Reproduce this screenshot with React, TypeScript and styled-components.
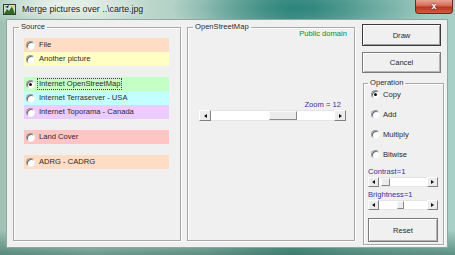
import React from "react";
import styled, { createGlobalStyle } from "styled-components";

const GlobalStyle = createGlobalStyle`
  html, body { margin: 0; padding: 0; overflow: hidden; background: #6f9c90; }
  * { box-sizing: border-box; }
`;

const UI_FONT = `"Liberation Sans", Arial, sans-serif`;

const Window = styled.div`
  width: 455px;
  height: 255px;
  display: flex;
  flex-direction: column;
  font-family: ${UI_FONT};
  font-size: 7.6px;
  color: #2a2a2a;
  background:
    radial-gradient(ellipse 130px 30px at 300px 8px, rgba(30, 125, 115, 0.8), rgba(30, 125, 115, 0) 100%),
    radial-gradient(ellipse 90px 25px at 60px 4px, rgba(235, 245, 238, 0.9), rgba(235, 245, 238, 0) 100%),
    linear-gradient(180deg, rgba(0, 0, 0, 0) 90%, rgba(40, 100, 85, 0.6) 100%),
    linear-gradient(90deg, #9fc2b4 0%, #cfe2d8 20%, #a9cbc0 45%, #5f9f95 64%, #8fc0b6 80%, #a9d0c6 100%);
`;

const TitleBar = styled.div`
  height: 19px;
  display: flex;
  align-items: flex-start;
  padding-left: 3px;
`;

const AppIcon = styled.svg`
  width: 14px;
  height: 13px;
  margin-top: 3px;
  flex: none;
`;

const Title = styled.div`
  margin-left: 5px;
  margin-top: 4px;
  font-family: ${UI_FONT};
  font-size: 8.8px;
  line-height: 10px;
  color: #1a1a1a;
  white-space: nowrap;
  text-shadow: 0 0 4px rgba(255, 255, 255, 0.8);
`;

const Spacer = styled.div`
  flex: 1;
`;

const CloseButton = styled.div`
  width: 38px;
  height: 14px;
  margin-right: 2px;
  border: 1px solid #6b2a22;
  border-top: none;
  border-radius: 0 0 4px 4px;
  background: linear-gradient(180deg, #e9a493 0%, #d26a55 45%, #b8371f 55%, #cf5e3f 100%);
  display: flex;
  align-items: center;
  justify-content: center;
  color: #fff;
  font-family: ${UI_FONT};
  font-weight: bold;
  font-size: 9px;
  line-height: 1;
  text-shadow: 0 0 2px #5a1a10;
`;

const Client = styled.div`
  flex: 1;
  margin: 0 7px 7px 6px;
  background: #f0f0f0;
  display: flex;
  align-items: stretch;
  padding: 2px 0 6px 6px;
  gap: 6px;
  border: 1px solid #8fa8a0;
`;

const Group = styled.fieldset<{ $width: number }>`
  margin: 0;
  width: ${(p) => p.$width}px;
  min-width: 0;
  border: 1px solid #a8a8a8;
  box-shadow: inset 1px 1px 0 #fff, 1px 1px 0 #fff;
  padding: 0;
  display: flex;
  flex-direction: column;
`;

const Legend = styled.legend<{ $indent: number }>`
  margin-left: ${(p) => p.$indent}px;
  padding: 0 2px;
  font-size: 7.6px;
  line-height: 10px;
  color: #2a2a2a;
`;

const RadioList = styled.div`
  display: flex;
  flex-direction: column;
  padding: 6px 0 0 10px;
`;

const RadioRow = styled.div<{ $bg: string; $gap: number }>`
  width: 145px;
  height: 14px;
  margin-top: ${(p) => p.$gap}px;
  background: ${(p) => p.$bg};
  display: flex;
  align-items: center;
  padding-left: 2px;
  gap: 3px;
  white-space: nowrap;
`;

const Radio = styled.span<{ $checked?: boolean }>`
  width: 9px;
  height: 9px;
  flex: none;
  border-radius: 50%;
  background: #fff;
  border: 1px solid;
  border-color: #9a9a9a #f4f4f4 #f4f4f4 #9a9a9a;
  box-shadow: inset 1px 1px 0 #6a6a6a;
  display: flex;
  align-items: center;
  justify-content: center;
  &::after {
    content: "";
    width: 3px;
    height: 3px;
    border-radius: 50%;
    background: ${(p) => (p.$checked ? "#111" : "transparent")};
  }
`;

const RadioLabel = styled.span<{ $focused?: boolean }>`
  line-height: 10px;
  padding: 0 1px;
  outline: ${(p) => (p.$focused ? "1px dotted #444" : "none")};
  outline-offset: 0;
`;

const MapBody = styled.div`
  flex: 1;
  display: flex;
  flex-direction: column;
  padding: 0 8px 0 11px;
`;

const PublicDomain = styled.div`
  align-self: flex-end;
  margin-top: -3px;
  margin-right: -1px;
  color: #138a13;
  line-height: 10px;
`;

const ZoomLabel = styled.div`
  align-self: flex-end;
  margin-top: 61px;
  margin-right: 5px;
  color: #34349a;
  line-height: 10px;
`;

const ScrollBar = styled.div<{ $height: number }>`
  height: ${(p) => p.$height}px;
  display: flex;
  align-items: stretch;
  background: #fff;
`;

const ArrowButton = styled.div<{ $w: number }>`
  width: ${(p) => p.$w}px;
  flex: none;
  background: #ececec;
  border: 1px solid;
  border-color: #fff #808080 #808080 #fff;
  display: flex;
  align-items: center;
  justify-content: center;
`;

const Arrow = styled.span<{ $dir: "left" | "right" }>`
  width: 0;
  height: 0;
  border-top: 2.5px solid transparent;
  border-bottom: 2.5px solid transparent;
  ${(p) =>
    p.$dir === "left"
      ? "border-right: 3px solid #111;"
      : "border-left: 3px solid #111;"}
`;

const Track = styled.div`
  flex: 1;
  display: flex;
  align-items: stretch;
  background: #fff;
  border-top: 1px solid #e4e4e4;
  border-bottom: 1px solid #e4e4e4;
`;

const TrackPart = styled.div`
  flex: none;
`;

const Thumb = styled.div<{ $w: number }>`
  width: ${(p) => p.$w}px;
  flex: none;
  background: #ececec;
  border: 1px solid;
  border-color: #fafafa #8a8a8a #8a8a8a #fafafa;
`;

const RightColumn = styled.div`
  width: 82px;
  display: flex;
  flex-direction: column;
  padding-top: 2px;
  margin-left: 1px;
`;

const PushButton = styled.div<{ $default?: boolean; $w: number; $h: number }>`
  width: ${(p) => p.$w}px;
  height: ${(p) => p.$h}px;
  background: #f0f0f0;
  border: 1px solid ${(p) => (p.$default ? "#3a3a3a" : "#7a7a7a")};
  box-shadow: ${(p) =>
    p.$default
      ? "inset 1px 1px 0 #fff, inset -1px -1px 0 #a0a0a0"
      : "inset 1px 1px 0 #fff, inset -1px -1px 0 #b4b4b4"};
  display: flex;
  align-items: center;
  justify-content: center;
  color: #2a2a2a;
  font-size: 7.6px;
`;

const OpGroup = styled(Group)`
  margin-top: 5px;
  margin-left: 1px;
  flex: 1;
  margin-bottom: -4px;
`;

const OpBody = styled.div`
  display: flex;
  flex-direction: column;
  padding: 1px 0 0 4px;
`;

const OpRadio = styled.div`
  height: 10px;
  margin-top: 10px;
  margin-left: 3px;
  display: flex;
  align-items: center;
  gap: 3px;
  &:first-child {
    margin-top: 0;
  }
`;

const SliderLabel = styled.div<{ $top: number }>`
  margin-top: ${(p) => p.$top}px;
  color: #34349a;
  line-height: 10px;
`;

const SliderBox = styled.div`
  width: 70px;
`;

const ResetWrap = styled.div`
  margin-top: 8px;
`;

const ButtonGap = styled.div`
  height: 6px;
`;

type SBProps = { height: number; arrow: number; before: number; thumb: number };

const Scroll: React.FC<SBProps> = ({ height, arrow, before, thumb }) => (
  <ScrollBar $height={height}>
    <ArrowButton $w={arrow}>
      <Arrow $dir="left" />
    </ArrowButton>
    <Track>
      <TrackPart style={{ width: before }} />
      <Thumb $w={thumb} />
    </Track>
    <ArrowButton $w={arrow}>
      <Arrow $dir="right" />
    </ArrowButton>
  </ScrollBar>
);

const sources = [
  { label: "File", bg: "#ffdcc4", gap: 0 },
  { label: "Another picture", bg: "#ffffc4", gap: 0 },
  { label: "Internet OpenStreetMap", bg: "#c4ffc4", gap: 11, checked: true },
  { label: "Internet Terraserver - USA", bg: "#c4ffff", gap: 0 },
  { label: "Internet Toporama - Canada", bg: "#eccbff", gap: 0 },
  { label: "Land Cover", bg: "#ffc4c4", gap: 11 },
  { label: "ADRG - CADRG", bg: "#ffdcc4", gap: 11 },
];

const operations = ["Copy", "Add", "Multiply", "Bitwise"];

export default function App() {
  return (
    <>
      <GlobalStyle />
      <Window>
        <TitleBar>
          <AppIcon viewBox="0 0 14 13">
            <rect x="0.5" y="1.5" width="12" height="10" fill="#cfe0c8" stroke="#2e4226" />
            <path d="M1 11 L4 6 L6 8 L9 3 L12 11 Z" fill="#2f6a2a" />
            <path d="M2 4 L6 2 L5 5 Z" fill="#1e3a7a" />
            <circle cx="10" cy="4" r="1.3" fill="#f0d040" />
          </AppIcon>
          <Title>Merge pictures over ..\carte.jpg</Title>
          <Spacer />
          <CloseButton>x</CloseButton>
        </TitleBar>
        <Client>
          <Group $width={168}>
            <Legend $indent={5}>Source</Legend>
            <RadioList>
              {sources.map((s) => (
                <RadioRow key={s.label} $bg={s.bg} $gap={s.gap}>
                  <Radio $checked={s.checked} />
                  <RadioLabel $focused={s.checked}>{s.label}</RadioLabel>
                </RadioRow>
              ))}
            </RadioList>
          </Group>
          <Group $width={168}>
            <Legend $indent={5}>OpenStreetMap</Legend>
            <MapBody>
              <PublicDomain>Public domain</PublicDomain>
              <ZoomLabel>Zoom = 12</ZoomLabel>
              <Scroll height={11} arrow={12} before={58} thumb={28} />
            </MapBody>
          </Group>
          <RightColumn>
            <PushButton $default $w={79} $h={22}>
              Draw
            </PushButton>
            <ButtonGap />
            <PushButton $w={79} $h={21}>
              Cancel
            </PushButton>
            <OpGroup $width={81}>
              <Legend $indent={4}>Operation</Legend>
              <OpBody>
                {operations.map((op, i) => (
                  <OpRadio key={op}>
                    <Radio $checked={i === 0} />
                    <span>{op}</span>
                  </OpRadio>
                ))}
                <SliderLabel $top={8}>Contrast=1</SliderLabel>
                <SliderBox>
                  <Scroll height={10} arrow={11} before={2} thumb={9} />
                </SliderBox>
                <SliderLabel $top={3}>Brightness=1</SliderLabel>
                <SliderBox>
                  <Scroll height={10} arrow={11} before={18} thumb={7} />
                </SliderBox>
                <ResetWrap>
                  <PushButton $w={70} $h={24}>
                    Reset
                  </PushButton>
                </ResetWrap>
              </OpBody>
            </OpGroup>
          </RightColumn>
        </Client>
      </Window>
    </>
  );
}
